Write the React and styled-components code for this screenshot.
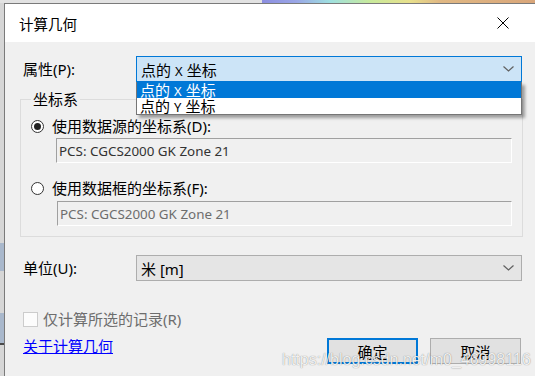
import React from "react";
import styled, { createGlobalStyle } from "styled-components";

const Global = createGlobalStyle`
  html, body { margin: 0; padding: 0; }
  body {
    width: 535px; height: 376px; overflow: hidden;
    background: linear-gradient(90deg, #e2e2e2 0, #e2e2e2 262px, #8c8ee0 262px, #9aa6e6 296px, #9fe0e0 330px, #c8ea9c 370px, #e8e08c 410px, #e0b884 440px, #d9a67a 535px);
    font-family: "Segoe UI", "Noto Sans", "Noto Sans CJK SC", sans-serif;
  }
`;

const Desktop = styled.div`
  display: flex;
  padding: 3px 0 0 0;
  height: 373px;
`;

const LeftStrip = styled.div`
  width: 4px;
  flex: none;
  background: linear-gradient(180deg, #d6d6d6 0, #d6d6d6 240px, #a9b8cc 240px, #a9b8cc 268px, #d6d6d6 268px, #d6d6d6 310px, #a9b8cc 310px, #a9b8cc 340px, #4a4a4a 340px, #4a4a4a 342px, #d6d6d6 342px);
`;

const Window = styled.div`
  position: relative;
  flex: 1;
  display: flex;
  flex-direction: column;
  border-left: 1px solid #7a7a7a;
  border-top: 1px solid #7a7a7a;
  background: #f0f0f0;
  color: #000;
`;

const TitleBar = styled.div`
  height: 38px;
  background: #fff;
  display: flex;
  align-items: center;
  justify-content: space-between;
  padding: 0 26px 0 14px;
  font-size: 14.5px;
  font-family: "Segoe UI", "Noto Sans CJK SC", sans-serif;
`;

const Content = styled.div`
  flex: 1;
  display: flex;
  flex-direction: column;
  padding: 14px 12px 0 15px;
  font-size: 15px;
`;

const FormRow = styled.div`
  display: flex;
  align-items: center;
  padding-left: 3px;
  margin-top: ${(p) => p.$mt || 0}px;
  position: relative;
`;

const Label = styled.div`
  width: 113px;
  flex: none;
  line-height: 20px;
`;

const ComboWrap = styled.div`
  position: relative;
  flex: 1;
  margin-right: 1px;
`;

const Combo = styled.div`
  height: 26px;
  box-sizing: border-box;
  display: flex;
  align-items: center;
  justify-content: space-between;
  padding: 0 7px 0 4px;
  background: ${(p) => (p.$focused ? "#cce4f7" : "#e5e5e5")};
  border: 1px solid ${(p) => (p.$focused ? "#0078d7" : "#adadad")};
`;

const ListBox = styled.div`
  position: absolute;
  top: 100%;
  left: 0;
  right: 0;
  border: 1px solid #767676;
  border-top: none;
  background: #fff;
  box-shadow: 3px 3px 3px rgba(0, 0, 0, 0.35);
  z-index: 5;
`;

const ListItem = styled.div`
  height: 16px;
  line-height: 16px;
  padding-left: 3px;
  background: ${(p) => (p.$selected ? "#0078d7" : "#fff")};
  color: ${(p) => (p.$selected ? "#fff" : "#000")};
`;

const Small = styled.span`
  font-size: 13px;
  margin: 0 4px 0 4px;
`;

const Group = styled.fieldset`
  margin: 7px 0 0 0;
  padding: 7px 10px 10px 10px;
  border: 1px solid #dcdcdc;
  min-width: 0;
  display: flex;
  flex-direction: column;
`;

const Legend = styled.legend`
  margin-left: 0;
  padding: 0 2px;
  line-height: 20px;
`;

const RadioRow = styled.div`
  display: flex;
  align-items: center;
  gap: 8px;
  line-height: 20px;
  margin-top: ${(p) => p.$mt || 0}px;
`;

const Radio = styled.span`
  width: 13px;
  height: 13px;
  box-sizing: border-box;
  border-radius: 50%;
  border: 1px solid #333;
  background: #fff;
  display: flex;
  align-items: center;
  justify-content: center;
  &::after {
    content: "";
    width: 7px;
    height: 7px;
    border-radius: 50%;
    background: ${(p) => (p.$checked ? "#222" : "transparent")};
  }
`;

const Field = styled.div`
  margin: ${(p) => p.$mt}px 0 0 ${(p) => p.$ml}px;
  height: 25px;
  box-sizing: border-box;
  border-top: 1px solid #a0a0a0;
  border-left: 1px solid #a0a0a0;
  border-right: 1px solid #fff;
  border-bottom: 1px solid #fff;
  background: #f0f0f0;
  color: ${(p) => (p.$disabled ? "#6d6d6d" : "#333")};
  font-size: 13.4px;
  display: flex;
  align-items: center;
  padding-left: 2px;
`;

const CheckRow = styled.div`
  display: flex;
  align-items: center;
  gap: 5px;
  padding-left: 3px;
  margin-top: 28px;
  line-height: 20px;
  color: #6d6d6d;
`;

const CheckBox = styled.span`
  width: 15px;
  height: 15px;
  box-sizing: border-box;
  border: 1px solid #cccccc;
  background: #fcfcfc;
`;

const Footer = styled.div`
  display: flex;
  justify-content: space-between;
  align-items: flex-start;
  padding-left: 3px;
  margin-top: 7px;
`;

const Link = styled.a`
  color: #0000ff;
  text-decoration: underline;
  line-height: 20px;
  cursor: pointer;
`;

const Buttons = styled.div`
  display: flex;
  gap: 12px;
  margin-top: 2px;
  margin-right: 2px;
`;

const Button = styled.button`
  width: 91px;
  height: 26px;
  box-sizing: border-box;
  background: #e1e1e1;
  border: ${(p) => (p.$default ? "2px solid #0078d7" : "1px solid #adadad")};
  font: inherit;
  font-size: 15px;
  color: #000;
  padding: 0;
`;

const Watermark = styled.div`
  position: absolute;
  left: 277px;
  bottom: 7px;
  font-family: "Liberation Sans", Arial, sans-serif;
  font-size: 16px;
  color: rgba(255, 255, 255, 0.88);
  text-shadow: 0 0 1px rgba(0, 0, 0, 0.5);
  pointer-events: none;
  white-space: nowrap;
`;

const Chevron = () => (
  <svg width="11" height="6" viewBox="0 0 11 6">
    <polyline points="0.5,0.5 5.5,5 10.5,0.5" fill="none" stroke="#606060" strokeWidth="1.2" />
  </svg>
);

const CloseIcon = () => (
  <svg width="12" height="12" viewBox="0 0 12 12">
    <path d="M0.5 0.5 L11.5 11.5 M11.5 0.5 L0.5 11.5" stroke="#000" strokeWidth="1" />
  </svg>
);

export default function App() {
  return (
    <>
      <Global />
      <Desktop>
        <LeftStrip />
        <Window>
          <TitleBar>
            <span>计算几何</span>
            <CloseIcon />
          </TitleBar>
          <Content>
            <FormRow>
              <Label>属性(P):</Label>
              <ComboWrap>
                <Combo $focused>
                  <span>点的<Small>X</Small>坐标</span>
                  <Chevron />
                </Combo>
                <ListBox>
                  <ListItem $selected>点的<Small>X</Small>坐标</ListItem>
                  <ListItem>点的<Small>Y</Small>坐标</ListItem>
                </ListBox>
              </ComboWrap>
            </FormRow>

            <Group>
              <Legend>坐标系</Legend>
              <RadioRow>
                <Radio $checked />
                <span>使用数据源的坐标系(D):</span>
              </RadioRow>
              <Field $mt={2} $ml={25}>PCS: CGCS2000 GK Zone 21</Field>
              <RadioRow $mt={15}>
                <Radio />
                <span>使用数据框的坐标系(F):</span>
              </RadioRow>
              <Field $mt={3} $ml={26} $disabled>PCS: CGCS2000 GK Zone 21</Field>
            </Group>

            <FormRow $mt={18}>
              <Label>单位(U):</Label>
              <ComboWrap>
                <Combo>
                  <span>米 [m]</span>
                  <Chevron />
                </Combo>
              </ComboWrap>
            </FormRow>

            <CheckRow>
              <CheckBox />
              <span>仅计算所选的记录(R)</span>
            </CheckRow>

            <Footer>
              <Link>关于计算几何</Link>
              <Buttons>
                <Button $default>确定</Button>
                <Button>取消</Button>
              </Buttons>
            </Footer>
          </Content>
          <Watermark>https://blog.csdn.net/m0_46998116</Watermark>
        </Window>
      </Desktop>
    </>
  );
}
